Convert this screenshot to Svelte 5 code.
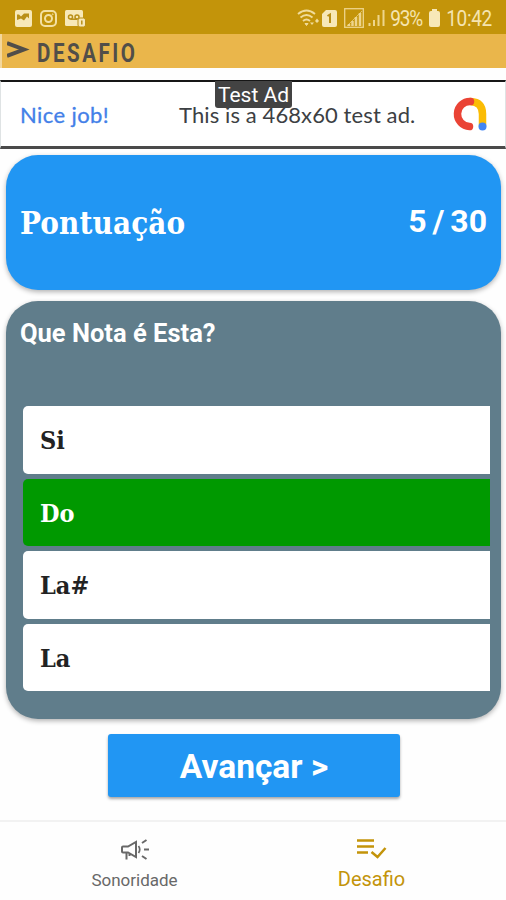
<script>
  let selected = 'Do';
  let tab = 'desafio';

  const score = 5;
  const total = 30;
  const options = ['Si', 'Do', 'La#', 'La'];
</script>

<div class="screen">
  <div class="status">
    <div class="left">
      <svg width="17" height="17" viewBox="0 0 17 17">
        <rect width="17" height="17" rx="2" fill="#f7e8b8" />
        <path d="M2 10V4.500h2l2 2 3-3h5v5l-2-2-3 4-3-2z" fill="#b98f18" />
      </svg>
      <svg width="17" height="17" viewBox="0 0 17 17" fill="none" stroke="#f3e0a2" stroke-width="2">
        <rect x="1" y="1" width="15" height="15" rx="4" />
        <circle cx="8.5" cy="8.5" r="3.5" />
        <circle cx="12.7" cy="4.3" r=".5" stroke-width="1" />
      </svg>
      <svg width="21" height="17" viewBox="0 0 21 17">
        <rect width="18" height="16" rx="1.5" fill="#f7e8b8" />
        <g fill="none" stroke="#b98f18" stroke-width="1.5">
          <circle cx="5.5" cy="7" r="2" />
          <circle cx="12" cy="7" r="2" />
          <path d="M5.500 9.200H12" />
        </g>
        <rect x="13" y="8" width="7.500" height="9" rx="2" fill="#f7e8b8" stroke="#b98f18" />
        <path d="M16.800 10.500v4" stroke="#b98f18" stroke-width="1.500" />
      </svg>
    </div>
    <div class="right">
      <svg class="wifi" width="22" height="18" viewBox="0 0 22 18" fill="none" stroke="#f0dc9c" stroke-width="1.900">
        <path d="M1 5Q9.500-2 18 5M3.500 8.500q6-5 12 0M6 12q3.500-3 7 0" />
        <path d="M8 14.500h3l-1.500 2z" fill="#f0dc9c" stroke-width="1" />
        <path d="M13 13.500l2 2.500 2-2.500zM18 12l2-2.500 2 2.500-2 2z" fill="#f0dc9c" stroke="none" />
      </svg>
      <svg class="sim" width="15" height="17" viewBox="0 0 15 17">
        <path d="M4 0h9q2 0 2 2v13q0 2-2 2H2q-2 0-2-2V4z" fill="#f7e8b8" />
        <path d="M5.500 6L8 4.500V13" fill="none" stroke="#b98f18" stroke-width="2" />
      </svg>
      <svg class="boxed" width="20" height="20" viewBox="0 0 20 20" fill="none" stroke="#eed58c">
        <rect x=".7" y=".7" width="18.600" height="18.600" stroke-width="1.300" />
        <path d="M5 16v2M8.500 13v5M12 9v9M16 5v13" stroke-width="2.500" />
        <path d="M3 18L18 3" stroke-width=".7" />
      </svg>
      <svg class="bars" width="17" height="18" viewBox="0 0 17 18" stroke="#eed58c" stroke-width="2">
        <path d="M1.500 14v3M6 11v6M10.500 6v11M15.500 1v16" />
      </svg>
      <span class="percent">93%</span>
      <svg class="battery" width="11" height="18" viewBox="0 0 11 18" fill="#f7e8b8">
        <path d="M3 0h5v2h1q2 0 2 2v12q0 2-2 2H2q-2 0-2-2V4q0-2 2-2h1z" />
      </svg>
      <span class="clock">10:42</span>
    </div>
  </div>

  <header>
    <svg width="23" height="20" viewBox="0 0 23 20" fill="none" stroke="#514e49" stroke-width="4">
      <path d="M0 3L17 9.500 0 16" />
    </svg>
    <h1>DESAFIO</h1>
  </header>

  <div class="ad">
    <span class="nice">Nice job!</span>
    <span class="message">This is a 468x60 test ad.</span>
    <svg width="35" height="35" viewBox="0 0 35 35" fill="none" stroke-width="7.500" stroke-linecap="round">
      <path d="M17.500 4.500Q29.500 5 29.500 17v11" stroke="#fbbc04" />
      <path d="M17.500 4.500A12.500 12.500 0 0 0 16.500 29.500" stroke="#ea4335" />
      <circle cx="29.500" cy="29.500" r="4" fill="#4285f4" />
    </svg>
    <span class="tag">Test Ad</span>
  </div>

  <section class="card score">
    <h2>Pontuação</h2>
    <strong>{score} / {total}</strong>
  </section>

  <section class="card quiz">
    <h3>Que Nota é Esta?</h3>
    <div class="options">
      {#each options as option}
        <button class="option" class:correct={selected === option} on:click={() => selected = option}>{option}</button>
      {/each}
    </div>
  </section>

  <button class="next">Avançar &gt;</button>

  <nav>
    <button class:active={tab === 'sonoridade'} on:click={() => tab = 'sonoridade'}>
      <svg width="30" height="24" viewBox="0 0 30 24" fill="none" stroke="currentColor" stroke-width="2">
        <path d="M3 8.500h5l8-4.500v15l-8-4.500H3q-1 0-1-1v-4q0-1 1-1zM6.500 15v6.500M9.500 15v3" />
        <path d="M18.500 8q2.500 3.500 0 7" stroke-width="1.700" />
        <path d="M22 5l4.500-3M24 11.500h5M22 18l4.500 3" />
      </svg>
      <span>Sonoridade</span>
    </button>
    <button class:active={tab === 'desafio'} on:click={() => tab = 'desafio'}>
      <svg width="30" height="24" viewBox="0 0 30 24" fill="none" stroke="currentColor" stroke-width="2.500">
        <path d="M0 2.500h17M0 8.500h17M0 14.500h11" />
        <path d="M14.500 14l6 5 8-9" />
      </svg>
      <span>Desafio</span>
    </button>
  </nav>
</div>

<style>
  :global(body) {
    background: #fefefe;
  }
  .screen {
    width: 506px;
    height: 900px;
    display: flex;
    flex-direction: column;
    overflow: hidden;
    font-family: Roboto, sans-serif;
  }
  svg { flex: none; }
  h1, h2, h3 { margin: 0; }
  button {
    border: none;
    padding: 0;
    font-family: inherit;
    cursor: pointer;
  }

  .status {
    height: 34px;
    box-sizing: border-box;
    padding: 2px 14px 0 15px;
    background: #c3940a;
    color: #f5e4b0;
    display: flex;
    justify-content: space-between;
    align-items: center;
    font-size: 19px;
  }
  .left, .right {
    display: flex;
    align-items: center;
  }
  .left { gap: 8px; }
  .wifi { margin-left: -2px; }
  .sim { margin-left: 3px; }
  .boxed { margin-left: 7px; }
  .bars { margin-left: 4px; }
  .percent, .clock { transform: scaleY(1.12); }
  .percent { margin-left: 5px; width: 33px; letter-spacing: -1.2px; }
  .battery { margin-left: 6px; }
  .clock { margin-left: 6px; letter-spacing: -0.3px; }

  header {
    height: 34px;
    box-sizing: border-box;
    padding: 1px 0 0 5px;
    border-left: 2px solid #f3d79d;
    background: #eab64b;
    display: flex;
    align-items: center;
  }
  header svg { margin-top: -3px; }
  h1 {
    margin: 2px 0 0 7px;
    font-family: Roboto, sans-serif;
    font-size: 26px;
    line-height: 30px;
    letter-spacing: 3.2px;
    color: #514e49;
    transform: scaleX(0.79);
    transform-origin: left;
  }

  .ad {
    position: relative;
    height: 69px;
    box-sizing: border-box;
    margin-top: 12px;
    border: 1px solid #dfe3e4;
    border-top: 2px solid #161616;
    border-bottom: 3px solid #4a4a4a;
    background: #fff;
    display: flex;
    align-items: center;
    padding: 0 17px 0 19px;
    font-family: Lato, sans-serif;
    font-size: 22px;
    color: #3c4043;
  }
  .nice {
    width: 159px;
    letter-spacing: 0.4px;
    color: #4380e8;
    -webkit-text-stroke: 0.3px #4380e8;
  }
  .message { flex: 1; white-space: nowrap; letter-spacing: 0.1px; }
  .tag {
    position: absolute;
    top: -1px;
    left: 214px;
    width: 77px;
    height: 27px;
    border-radius: 0 0 3px 3px;
    background: #434343;
    color: #fff;
    font: 21px/28px Roboto, sans-serif;
    text-align: center;
  }

  .card {
    margin: 0 5px 0 6px;
    box-sizing: border-box;
    border-radius: 32px;
    color: #fff;
    box-shadow: 0 2px 5px rgba(0, 0, 0, 0.3);
  }
  .score {
    height: 135px;
    margin-top: 6px;
    padding: 0 14px;
    background: #2196f3;
    display: flex;
    align-items: center;
    justify-content: space-between;
  }
  h2 {
    font-family: 'DejaVu Serif Condensed', 'DejaVu Serif', serif;
    font-size: 31px;
    font-stretch: condensed;
    letter-spacing: 0.15px;
  }
  .score strong {
    margin-top: -3px;
    font-size: 32px;
    word-spacing: -2px;
  }

  .quiz {
    height: 418px;
    margin-top: 11px;
    padding: 16px 11px 0 17px;
    background: #607d8b;
  }
  h3 {
    height: 89px;
    margin-left: -3px;
    font-size: 25.5px;
    line-height: 33px;
  }
  .options {
    display: grid;
    grid-auto-rows: 67.5px;
    gap: 5px;
  }
  .option {
    padding: 2px 0 0 17px;
    border-radius: 5px 0 0 5px;
    background: #fff;
    color: #222;
    font-family: 'DejaVu Serif Condensed', 'DejaVu Serif', serif;
    font-size: 25px;
    font-stretch: condensed;
    font-weight: bold;
    text-align: left;
  }
  .correct { background: #009900; color: #fff; }

  .next {
    width: 292px;
    height: 63px;
    margin: 15px 0 0 108px;
    padding-top: 2px;
    border-radius: 3px;
    background: #2196f3;
    color: #fff;
    font-size: 33.5px;
    font-weight: bold;
    box-shadow: 0 2px 3px rgba(0, 0, 0, 0.35);
  }

  nav {
    height: 80px;
    box-sizing: border-box;
    margin-top: auto;
    padding: 0 16px;
    border-top: 2px solid #f2f2f2;
    display: flex;
  }
  nav button {
    flex: 1;
    background: none;
    color: #686868;
    font-size: 17px;
    display: flex;
    flex-direction: column;
    align-items: center;
    padding-top: 16px;
    gap: 8px;
  }
  nav .active { color: #c3940a; font-size: 20px; gap: 5px; }
</style>
